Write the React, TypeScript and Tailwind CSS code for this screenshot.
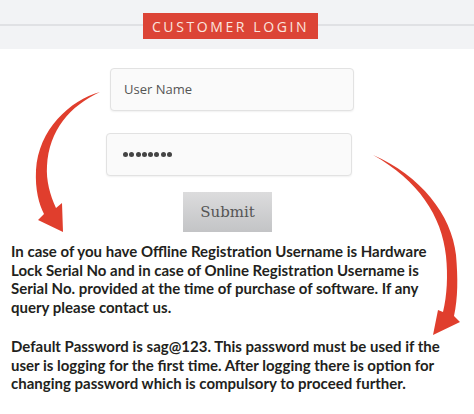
import React from "react";

export default function App() {
  const dots = [0, 1, 2, 3, 4, 5, 6, 7];
  return (
    <div className="relative w-[474px] h-[414px] overflow-hidden bg-white">
      <div className="flex h-[49px] items-start bg-[#f2f3f5] pt-[13px]">
        <div className="mt-[11px] h-[2px] w-[143px] bg-[#e0e1e4]" />
        <div
          className="flex h-[26px] w-[175px] items-center justify-center bg-[#dc4436] text-[14px] tracking-[2.6px] text-[#fbe4df]"
          style={{ fontFamily: '"Open Sans", sans-serif' }}
        >
          CUSTOMER LOGIN
        </div>
        <div className="mt-[11px] h-[2px] flex-1 bg-[#e0e1e4]" />
      </div>

      <div className="flex flex-col">
        <div
          className="ml-[110px] mt-[19px] flex h-[43px] w-[244px] items-center rounded-[4px] border border-[#e2e2e2] bg-[#fafafa] pl-[13px] text-[13px] text-[#555] shadow-[0_1px_2px_rgba(0,0,0,0.06)]"
          style={{ fontFamily: '"Open Sans", sans-serif' }}
        >
          User Name
        </div>
        <div className="ml-[106px] mt-[22px] flex h-[43px] w-[246px] items-center gap-[1.3px] rounded-[4px] border border-[#e2e2e2] bg-[#fafafa] pl-[16px] shadow-[0_1px_2px_rgba(0,0,0,0.06)]">
          {dots.map((d) => (
            <div key={d} className="h-[5px] w-[5px] rounded-full bg-[#444]" />
          ))}
        </div>
        <div
          className="ml-[183px] mt-[16px] flex h-[40px] w-[89px] items-center justify-center bg-gradient-to-b from-[#dcdcdd] to-[#c3c4c6] text-[15px] text-[#555]"
          style={{ fontFamily: '"DejaVu Serif", serif' }}
        >
          Submit
        </div>
      </div>

      <div
        className="ml-[11px] mt-[10px] text-[15px] font-bold leading-[18.7px] text-[#231f20]"
        style={{ fontFamily: 'Lato, "Open Sans", sans-serif' }}
      >
        <p>
          In case of you have Offline Registration Username is Hardware
          <br />
          Lock Serial No and in case of Online Registration Username is
          <br />
          Serial No. provided at the time of purchase of software. If any
          <br />
          query please contact us.
        </p>
        <p className="mt-[20px]">
          Default Password is sag@123. This password must be used if the
          <br />
          user is logging for the first time. After logging there is option for
          <br />
          changing password which is compulsory to proceed further.
        </p>
      </div>

      <svg
        className="pointer-events-none absolute left-0 top-0"
        width="474"
        height="414"
        viewBox="0 0 474 414"
      >
        <path
          d="M100,92 C70,100 38,130 36,170 C35,190 39,204 44,214 L38,220 L63,232 L62,203 L56,208 C50,195 46,180 47,166 C49,130 70,106 100,92 Z"
          fill="#e03e2d"
        />
        <path
          d="M373,155 C420,175 452,215 456,255 C458,278 458,298 454,316 L460,322 L433,335 L438,310 L443,312 C447,295 448,276 446,256 C442,216 418,180 373,155 Z"
          fill="#e03e2d"
        />
      </svg>
    </div>
  );
}
